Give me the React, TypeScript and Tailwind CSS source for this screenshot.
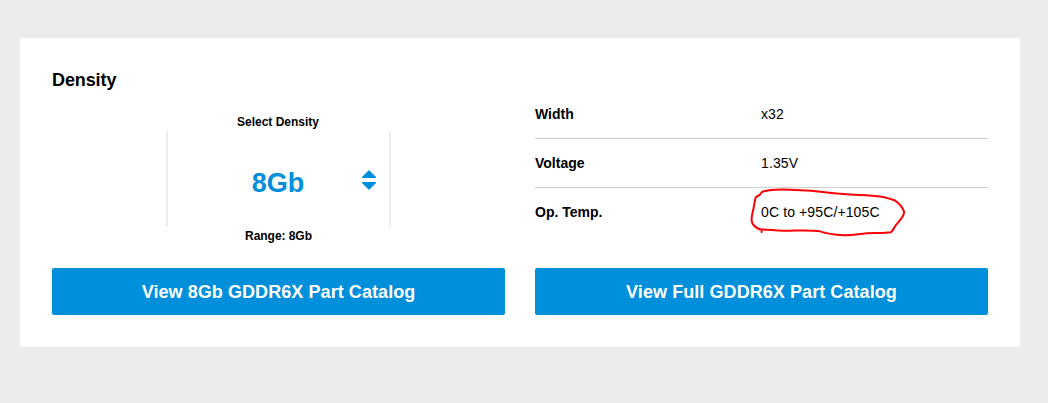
import { useState } from 'react';

const densities = ['8Gb'];

const specs = [
  { label: 'Width', value: 'x32' },
  { label: 'Voltage', value: '1.35V' },
  { label: 'Op. Temp.', value: '0C to +95C/+105C', circled: true },
];

function Circled() {
  return (
    <svg
      className="pointer-events-none absolute -left-[21px] -top-[21px] h-[65px] w-[180px]"
      viewBox="0 0 540 195"
      fill="none"
      stroke="#fb0007"
      strokeWidth="6"
      strokeLinecap="round"
      strokeLinejoin="round"
    >
      <path d="M65 153L64 146C50 142 37 134 35 120C33 104 41 88 43 68L47 49L60 41L67 32C88 26 120 25 150 26C200 27 240 31 275 36C330 43 380 41 425 47C440 49 452 55 464 58C478 67 488 80 492 92C494 105 480 118 467 133C462 141 458 151 452 154C430 158 400 155 380 157C350 160 335 164 312 163C280 161 255 156 240 151C205 145 160 150 130 149C105 149 85 145 56 145" />
    </svg>
  );
}

export default function App() {
  const [density, setDensity] = useState(0);

  const step = (by: number) => {
    setDensity((density + by + densities.length) % densities.length);
  };

  return (
    <div className="h-[403px] bg-[#ececec] pt-[38px] pr-7 pl-5 font-['Liberation_Sans',Arial,sans-serif] text-black">
      <section className="h-[309px] bg-white px-8">
        <div className="grid h-[230px] grid-cols-2 gap-[30px]">
          <div>
            <h2 className="pt-[30px] text-[18px] leading-6 font-bold tracking-[-0.1px]">Density</h2>
            <div className="mx-auto mt-[21px] w-[225px] text-center">
              <p className="h-[18px] pr-px text-[12px] leading-[18px] font-bold">Select Density</p>
              <div className="flex h-24 items-center border-x-2 border-[#ececec]">
                <span className="mt-[7px] ml-16 flex-1 text-[27px] leading-8 font-bold text-[#008fdb]">
                  {densities[density]}
                </span>
                <div className="mt-0.5 mr-[13px] ml-[38px] flex w-[14px] flex-col gap-1">
                  <button aria-label="Next density" onClick={() => step(1)}>
                    <svg className="block h-2 w-[14px]" viewBox="0 0 14 8" fill="#008fdb">
                      <path d="M7 0L14 7V8H0V7Z" />
                    </svg>
                  </button>
                  <button aria-label="Previous density" onClick={() => step(-1)}>
                    <svg className="block h-2 w-[14px]" viewBox="0 0 14 8" fill="#008fdb">
                      <path d="M7 8L14 1V0H0V1Z" />
                    </svg>
                  </button>
                </div>
              </div>
              <p className="h-[18px] text-[12px] leading-[18px] font-bold tracking-[-0.05px]">Range: 8Gb</p>
            </div>
          </div>

          <dl className="pt-[52px] text-[14px] leading-5">
            {specs.map((spec) => (
              <div
                key={spec.label}
                className="grid h-[49px] grid-cols-[226px_1fr] items-center border-b border-[#cfcfcf] last:h-12 last:border-b-0"
              >
                <dt className="font-bold">{spec.label}</dt>
                <dd className="relative tracking-[0.12px]">
                  {spec.value}
                  {spec.circled && <Circled />}
                </dd>
              </div>
            ))}
          </dl>
        </div>

        <div className="grid grid-cols-2 gap-[30px] text-[18px] font-bold tracking-[0.07px] text-white">
          <button className="h-[47px] rounded-[2px] bg-[#008fdb] pt-0.5">View 8Gb GDDR6X Part Catalog</button>
          <button className="h-[47px] rounded-[2px] bg-[#008fdb] pt-0.5">View Full GDDR6X Part Catalog</button>
        </div>
      </section>
    </div>
  );
}
